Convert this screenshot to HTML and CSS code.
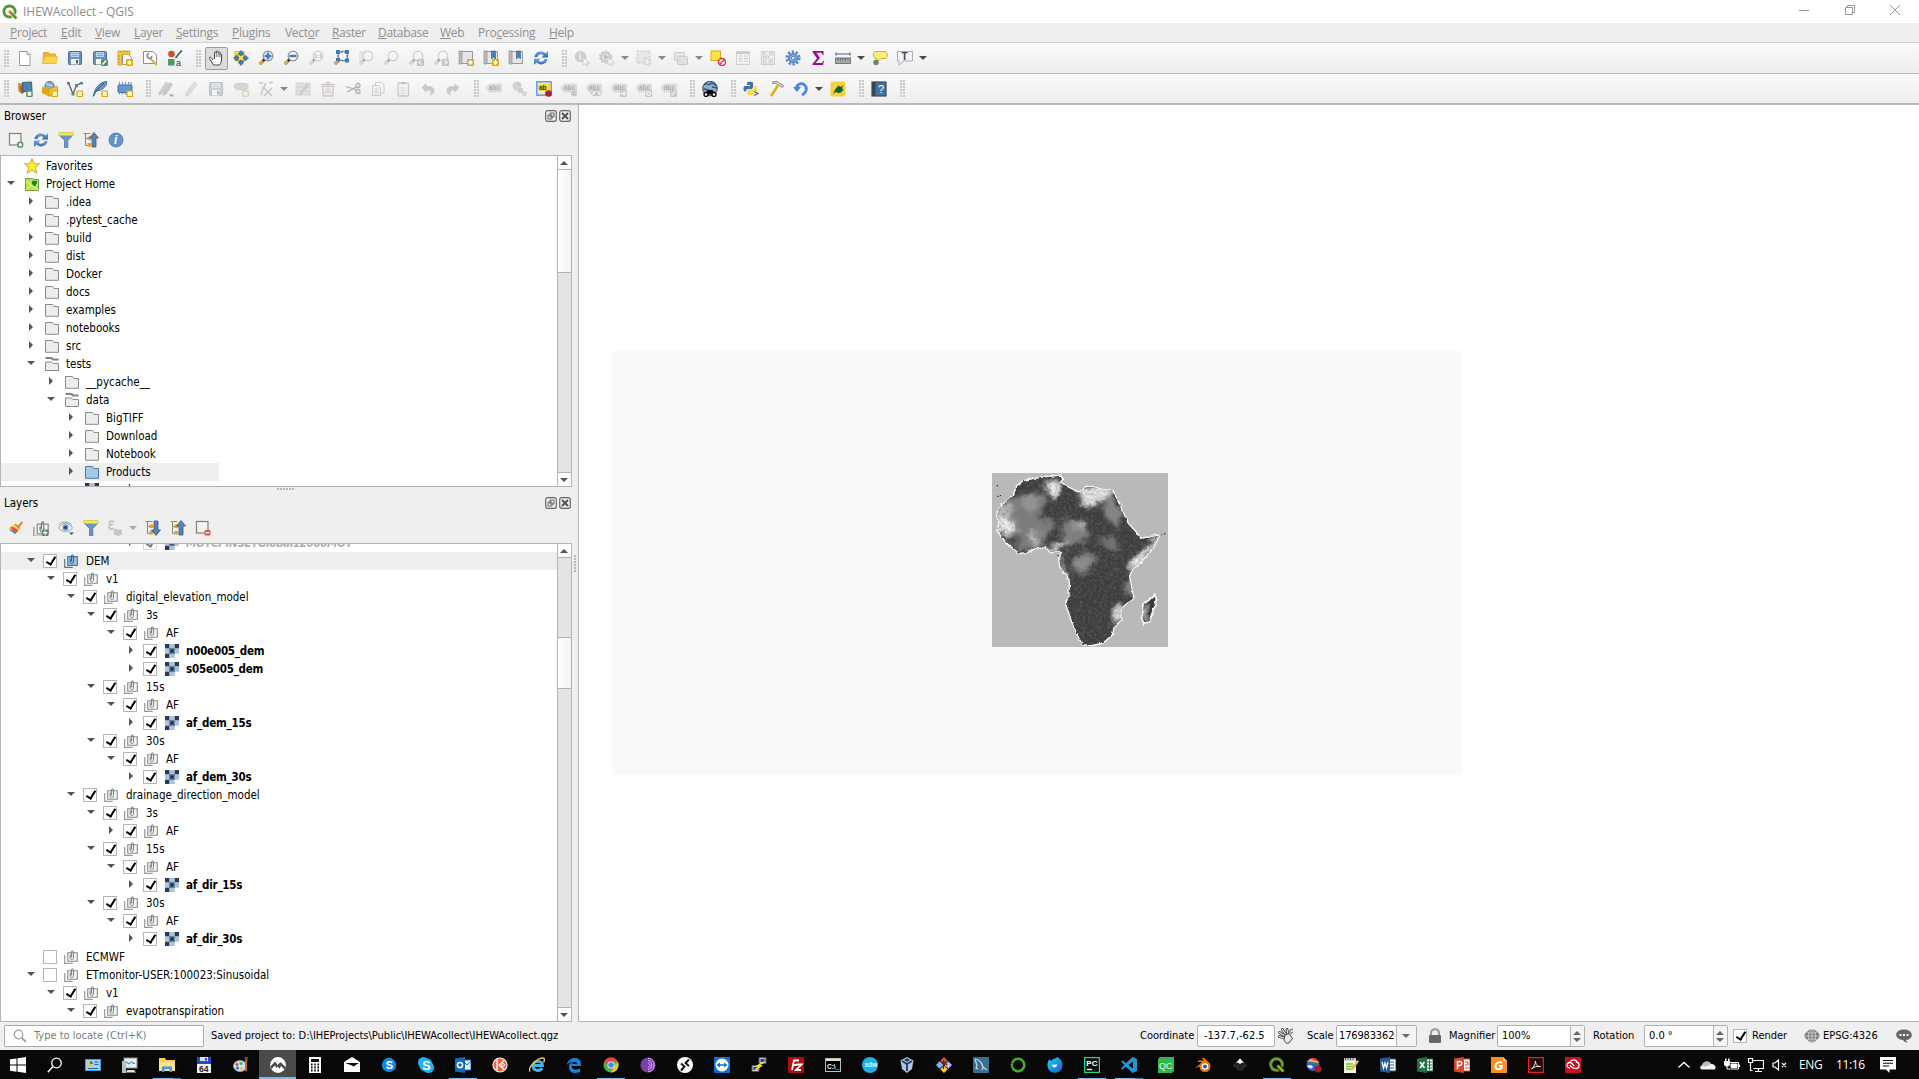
FILE: index.html
```html
<!DOCTYPE html>
<html lang="en">
<head>
<meta charset="utf-8">
<title>IHEWAcollect - QGIS</title>
<link rel="stylesheet" href="styles.css">
</head>
<body>
<svg class="defs" aria-hidden="true">
  <defs>
    <linearGradient id="blue" x1="0" y1="0" x2="0" y2="1"><stop offset="0" stop-color="#7aa7dc"/><stop offset="1" stop-color="#2f66a8"/></linearGradient>
    <linearGradient id="ff" x1="0" y1="0" x2="1" y2="1"><stop offset="0" stop-color="#2ad0f5"/><stop offset="1" stop-color="#0a5fd0"/></linearGradient>
  </defs>
  <symbol id="glass" viewBox="0 0 16 16"><path d="M6.500 9.500 2 14" stroke="#222" stroke-width="2.600"/><path d="M5 11 1.500 14.500" stroke="#edb52c" stroke-width="2.400"/><circle cx="10" cy="6" r="4.800" fill="#f4f6f8" stroke="#8d8d8d" stroke-width="1.200"/></symbol>
  <symbol id="star6" viewBox="0 0 16 16"><rect x="9" y="9" width="7" height="7" rx="1" fill="#d8ad12"/><path d="M12.500 10v5M10 12.500h5M10.700 10.700l3.600 3.600M14.300 10.700l-3.600 3.600" stroke="#fff8d0"/></symbol>
  <symbol id="ysq" viewBox="0 0 16 16"><rect x="10" y="10" width="5.500" height="5.500" rx=".8" fill="#fff6b0" stroke="#d0a818" stroke-width="1.200"/></symbol>
  <symbol id="new" viewBox="0 0 16 16"><path d="M2.500 1.500h7.500l3 3v11h-10.500z" fill="#fff" stroke="#9a9a9a"/><path d="M10 1.500v3h3" fill="#eee" stroke="#9a9a9a"/></symbol>
  <symbol id="open" viewBox="0 0 16 16"><path d="M1 13.500 1.500 2.500h5l1 1.500h6v3" fill="#e8b53a" stroke="#e3aa2a"/><path d="M.500 13.500 3.500 6.500h12l-1.500 7z" fill="#fdd54f" stroke="#efbf38"/></symbol>
  <symbol id="save" viewBox="0 0 16 16"><rect x="1.500" y="1.500" width="13" height="13" rx="1" fill="#6b93bf" stroke="#4d6d8f"/><rect x="4" y="2" width="8" height="5" fill="#b8d1ec"/><path d="M5 3.500h6M5 5.500h6" stroke="#7ea2c8" stroke-width=".8"/><rect x="4" y="9" width="8" height="5.500" fill="#f3f3f3"/><rect x="9" y="10" width="2" height="3.500" fill="#4d5f73"/></symbol>
  <symbol id="saveas" viewBox="0 0 16 16"><use href="#save"/><rect x="9" y="9" width="7" height="7" rx="1.500" fill="#578f5e"/><path d="m10.500 14.500 3.500-4" stroke="#fff" stroke-width="1.500"/></symbol>
  <symbol id="layout" viewBox="0 0 16 16"><path d="M5.500 4.500h6l3 3v7h-9z" fill="#fff" stroke="#999"/><path d="M1 1h12v3.500H4.500V15H1z" fill="#f5cf45" stroke="#c79f1c" stroke-width=".8"/><path d="M4 1v2M7 1v2M10 1v2M1 6h2M1 9h2M1 12h2" stroke="#a8830c" stroke-width=".7"/><use href="#star6"/></symbol>
  <symbol id="layoutmgr" viewBox="0 0 16 16"><path d="M1.500 1.500h9.500l3.500 3.500v8.500h-13z" fill="#fff" stroke="#909090"/><path d="m8 8 6.500 7" stroke="#d8b23a" stroke-width="2"/><path d="M7 3.500C4.500 4 4.500 8.500 8 8.500 9.500 8.500 10 7 9.500 6" fill="none" stroke="#888" stroke-width="1.600"/></symbol>
  <symbol id="style" viewBox="0 0 16 16"><circle cx="4.500" cy="4" r="3.300" fill="#cc4f22"/><path d="m10 6 5-5.500M8.500 8l2-2.500" stroke="#435f7e" stroke-width="1.800"/><rect x="1" y="9" width="6.500" height="6.500" fill="#4f9a62"/><text x="9" y="15.500" font-size="9" fill="#333">a</text></symbol>
  <symbol id="hand" viewBox="0 0 16 16"><path d="M5 10 3 7.500c-1-1-2 0-1.500 1l4 6.500h6c1-1.500 2-3 2-5V4.500c0-1-1.500-1-1.500 0V3c0-1.200-1.800-1.200-1.800 0V1.800C10.200.6 8.300.6 8.300 1.800V3c0-1.200-1.800-1.200-1.800 0v6" fill="#fff" stroke="#444" stroke-linejoin="round"/><path d="M8.300 3v4M10.200 3v4M12 4v3.500" stroke="#555" stroke-width=".8"/></symbol>
  <symbol id="pansel" viewBox="0 0 16 16"><rect x="2" y="1.500" width="9" height="9" fill="#ffe43e" stroke="#e0bb20"/><path d="m8 .5 3 3.500-3 2-3-2zM8 15.500l3-3.500-3-2-3 2zM.5 8 4 5l2 3-2 3zM15.500 8 12 5l-2 3 2 3z" fill="#4878b0" stroke="#335f92" stroke-width=".6"/></symbol>
  <symbol id="zin" viewBox="0 0 16 16"><use href="#glass"/><path d="M10 2.500v7M6.500 6h7" stroke="#477bb8" stroke-width="2.400"/></symbol>
  <symbol id="zout" viewBox="0 0 16 16"><use href="#glass"/><path d="M6.500 6h7" stroke="#477bb8" stroke-width="2.400"/></symbol>
  <symbol id="z11" viewBox="0 0 16 16"><use href="#glass"/><text x="6.300" y="8" font-size="5.500" font-weight="bold" fill="#333">1:1</text></symbol>
  <symbol id="zfull" viewBox="0 0 16 16"><use href="#glass"/><path d="M3 0h4v4H3zM12 0h4v4h-4zM12 8.500h4v4h-4zM3 8h4v3H3z" fill="#4878b0"/><path d="M5 2h9v8.500H5z" fill="none" stroke="#4878b0" stroke-width="1.200" stroke-dasharray="2 1"/></symbol>
  <symbol id="zsel" viewBox="0 0 16 16"><path d="M1 1h6v9H1z" fill="#d6cf9c"/><use href="#glass"/></symbol>
  <symbol id="zlast" viewBox="0 0 16 16"><use href="#glass"/><rect x="9" y="9" width="7" height="7" rx="1" fill="#777"/><path d="m13.500 10.500-2.500 2 2.500 2" fill="none" stroke="#fff" stroke-width="1.300"/></symbol>
  <symbol id="znext" viewBox="0 0 16 16"><use href="#glass"/><rect x="9" y="9" width="7" height="7" rx="1" fill="#777"/><path d="m11.500 10.500 2.500 2-2.500 2" fill="none" stroke="#fff" stroke-width="1.300"/></symbol>
  <symbol id="mapview" viewBox="0 0 16 16"><path d="M1.500 1.500h13v12h-13z" fill="#e6e6e6" stroke="#999"/><path d="M1 1h3v13H1z" fill="#bcbcbc" stroke="#8c8c8c" stroke-width=".7"/></symbol>
  <symbol id="newview" viewBox="0 0 16 16"><use href="#mapview"/><use href="#star6"/></symbol>
  <symbol id="bookmark" viewBox="0 0 16 16"><use href="#mapview"/><path d="M8.500 1h4v8l-2-2-2 2z" fill="#4d80ba" stroke="#315c8e" stroke-width=".6"/></symbol>
  <symbol id="newbookmark" viewBox="0 0 16 16"><use href="#bookmark"/><use href="#star6"/></symbol>
  <symbol id="refresh" viewBox="0 0 16 16"><path d="M1.500 7C2 1.500 9 0 12.500 3.500L15 1v6.500H8.500l2-2C8.500 3.500 5 4 4.500 7z" fill="url(#blue)"/><path d="M14.500 9C14 14.500 7 16 3.500 12.500L1 15V8.500h6.500l-2 2C7.500 12.500 11 12 11.500 9z" fill="url(#blue)"/></symbol>
  <symbol id="arrowcur" viewBox="0 0 16 16"><path d="m9 7 6.500 6-3 .2 1.500 2.500-1.500.3-1.400-2.300L9 15z" fill="#fff" stroke="#777" stroke-width=".8"/></symbol>
  <symbol id="ident" viewBox="0 0 16 16"><circle cx="6.500" cy="6.500" r="5.800" fill="#8a9298"/><text x="4.800" y="10" font-size="9" font-weight="bold" fill="#fff">i</text><use href="#arrowcur"/></symbol>
  <symbol id="action" viewBox="0 0 16 16"><circle cx="6.500" cy="7" r="4.500" fill="#ddd" stroke="#888" stroke-width="2.500"/><circle cx="6.500" cy="7" r="6.200" fill="none" stroke="#888" stroke-dasharray="2 2"/><path d="m5 4 5 3-5 3z" fill="#666"/><use href="#arrowcur"/></symbol>
  <symbol id="select" viewBox="0 0 16 16"><rect x="1" y="1" width="13" height="12" fill="#d8d4b4" stroke="#777" stroke-dasharray="2 1.500"/><use href="#arrowcur"/></symbol>
  <symbol id="selform" viewBox="0 0 16 16"><rect x="1.500" y="2.500" width="10" height="8" rx="1" fill="#ccc" stroke="#888"/><rect x="4.500" y="6.500" width="10" height="8" rx="1" fill="#c8c294" stroke="#888"/></symbol>
  <symbol id="desel" viewBox="0 0 16 16"><rect x="1" y="1" width="9.500" height="9.500" fill="#ffe43e" stroke="#d9a91c"/><circle cx="12" cy="12" r="3.500" fill="#fff" stroke="#d8343c" stroke-width="1.500"/><path d="m9.500 14.500 5-5" stroke="#d8343c" stroke-width="1.500"/></symbol>
  <symbol id="table" viewBox="0 0 16 16"><rect x="1.500" y="1.500" width="13" height="13" fill="#f0f0f0" stroke="#999"/><path d="M1.500 3h13" stroke="#888" stroke-width="2"/><path d="M4 6h3M9 6h4M4 8.500h3M9 8.500h4M4 11h3M9 11h4" stroke="#888"/></symbol>
  <symbol id="calc" viewBox="0 0 16 16"><rect x="1.500" y="1.500" width="13" height="13" fill="#f0f0f0" stroke="#999"/><path d="M1 5h14M1 9h14M1 13h14" stroke="#999"/><path d="M3 3h3M9 3h4M3 7h6M3 11h3M9 11h4" stroke="#777" stroke-width="2" stroke-dasharray="1.500 1"/></symbol>
  <symbol id="gear" viewBox="0 0 16 16"><circle cx="8" cy="8" r="6.300" fill="none" stroke="#4f83c4" stroke-width="2.600" stroke-dasharray="2.200 1.760"/><circle cx="8" cy="8" r="4" fill="#a9c9ec" stroke="#5b8fce" stroke-width="2.500"/><circle cx="8" cy="8" r="1.700" fill="#e8f1fb" stroke="#4f83c4"/></symbol>
  <symbol id="sigma" viewBox="0 0 16 16"><path d="M2.500 1h11v4h-1C12 3 11.500 2.700 10 2.700H6.500L10 8l-4.500 5H11c1.200 0 1.800-.8 2-2.200h1L13 15H2.500v-1.200L7 8.500 2.500 2z" fill="#9b0f93"/></symbol>
  <symbol id="measure" viewBox="0 0 16 16"><path d="M1 4h14M1 2.500v3M15 2.500v3" stroke="#44688f" stroke-width="1.200"/><rect x=".5" y="8" width="15" height="5.500" fill="#a8a8a8" stroke="#777"/><path d="M3 8v2.500M5.500 8v2.500M8 8v2.500M10.500 8v2.500M13 8v2.500" stroke="#555" stroke-width=".7"/></symbol>
  <symbol id="tips" viewBox="0 0 16 16"><path d="M4 1.500h9c3 0 3 7 0 7H9l-4 4V8.500H4c-3.500 0-3.500-7 0-7z" fill="#ffec7d" stroke="#d1a830"/><circle cx="4" cy="12.500" r="2.700" fill="#5f8c5d"/></symbol>
  <symbol id="annot" viewBox="0 0 16 16"><path d="M.5 1.500h15v9.500H7l-5 4v-4H.5z" fill="#f1f3f6" stroke="#a7b0b8"/><text x="4.500" y="10" font-size="10" font-weight="bold" fill="#444">T</text></symbol>
  <symbol id="dsm" viewBox="0 0 16 16"><path d="m1 2 7 1-1 9-5.500-1z" fill="#d38a2c"/><path d="m3 6 5-4v9l-4 2z" fill="#b65a23"/><path d="m5.500 1.500 9-.5.500 9-9 .5z" fill="#4f7fb5" stroke="#35608f"/><rect x="10" y="10" width="5" height="5.500" rx="1" fill="#fff" stroke="#578f5e" stroke-width="1.500"/></symbol>
  <symbol id="gpkg" viewBox="0 0 16 16"><circle cx="7.500" cy="5" r="4.500" fill="#8da9c5" stroke="#4a6c90"/><path d="M0 5.500 7 8v7.500L0 12z" fill="#e3a90b"/><path d="M7 8l8.500-3v7L7 15.500z" fill="#f5c52a" stroke="#c79114" stroke-width=".6"/><path d="M4 3c3-1 3 3 6 1" stroke="#fff" fill="none"/><use href="#ysq"/></symbol>
  <symbol id="newshp" viewBox="0 0 16 16"><path d="M1.500 2 6 13 9.500 4.500 14 2" fill="none" stroke="#555" stroke-width="1.200"/><path d="M0 1h3v2.500H0zM13 1h3v2.500h-3zM8 3h3v3H8zM4.500 11.500h3v3h-3z" fill="#667f99"/><use href="#ysq"/></symbol>
  <symbol id="feather" viewBox="0 0 16 16"><path d="M1.500 15C3 7 7 1.500 14.500.5c1 3-2.500 8.500-10 9.500" fill="#6f9ccd" stroke="#3a658f"/><path d="M1 15.500C4 10 7 6 12 2.500" fill="none" stroke="#2c4e73"/><use href="#ysq"/></symbol>
  <symbol id="memory" viewBox="0 0 16 16"><rect x="1" y="4" width="14" height="7.500" rx="1" fill="#6699d0" stroke="#3e6ea5"/><path d="M2.500 1v3M5.500 1v3M8.500 1v3M11.500 1v3M14 1v3M2.500 11.500v2M5.500 11.500v2M8.500 11.500v2" stroke="#7a97b8" stroke-width="1.200"/><use href="#ysq"/></symbol>
  <symbol id="pencil" viewBox="0 0 16 16"><path d="m4 11 7.500-10L14 3 6.500 13 3 15z" fill="#c4c4b4" stroke="#777" stroke-width=".8"/></symbol>
  <symbol id="pencils" viewBox="0 0 16 16"><path d="m1.500 11 6.500-10 2.500 1.800L4 12.500 1 14z" fill="#999" stroke="#777" stroke-width=".8"/><path d="m5.500 11 6.500-9.500 2.500 2L8 13 5 14.500z" fill="#9a8484" stroke="#766" stroke-width=".8"/><path d="M11 13.500h5L13.500 16z" fill="#111"/></symbol>
  <symbol id="savee" viewBox="0 0 16 16"><use href="#save"/><path d="m9 14 5-7 2 1.500-5 7z" fill="#a88"/></symbol>
  <symbol id="addpoly" viewBox="0 0 16 16"><path d="M2.500 2.500h10c3.500 0 3.500 6 0 6h-7c-5 0-5-4-3-6z" fill="#aaa" stroke="#888"/><use href="#star6"/></symbol>
  <symbol id="vertex" viewBox="0 0 16 16"><path d="M3 14C4 9 5 6 8 2M1 2h4M11 1.500h4M6 7l8 8M14 7l-8 8" stroke="#777" stroke-width="1.500" fill="none"/></symbol>
  <symbol id="modattr" viewBox="0 0 16 16"><rect x="1" y="2" width="14" height="12" fill="#c9c5ae" stroke="#aaa"/><path d="M1 6h14M1 10h14" stroke="#999"/><path d="m5 12 7-10 2 1.500L7 13l-3 1.500z" fill="#888"/></symbol>
  <symbol id="trash" viewBox="0 0 16 16"><path d="M2.500 5.500h11l-1 9.500h-9zM1.500 3.500h13M6 1.500h4" fill="none" stroke="#b47878" stroke-width="1.600"/><path d="M6 7v6M8 7v6M10 7v6" stroke="#b47878"/></symbol>
  <symbol id="cut" viewBox="0 0 16 16"><path d="M1 5.500 12 9M2 11 12 5.500" stroke="#444" stroke-width="1.300"/><circle cx="13" cy="4.500" r="2" fill="none" stroke="#444" stroke-width="1.300"/><circle cx="13" cy="10.500" r="2" fill="none" stroke="#444" stroke-width="1.300"/></symbol>
  <symbol id="copy" viewBox="0 0 16 16"><path d="M5.500 1.500h6l2.500 2.500v8H5.500z" fill="#fff" stroke="#888"/><path d="M2.500 4.500h6l2 2v8h-8z" fill="#eee" stroke="#888"/><path d="M4.500 8h4M4.500 10h4M4.500 12h4" stroke="#999"/></symbol>
  <symbol id="paste" viewBox="0 0 16 16"><rect x="3" y="2" width="10.500" height="13" rx="1" fill="#eee" stroke="#888" stroke-width="1.300"/><path d="M6 2h4.500" stroke="#666" stroke-width="2"/><path d="M5.500 7h5M5.500 9.500h5M5.500 12h5" stroke="#aaa"/></symbol>
  <symbol id="undo" viewBox="0 0 16 16"><path d="m1.500 6.500 5-4.500v3c5-.5 8 1.500 8 4.500 0 2.500-2 4-4.500 5 1.500-3 .5-5-3.500-5v2.500z" fill="#888"/></symbol>
  <symbol id="redo" viewBox="0 0 16 16"><path d="m14.500 6.500-5-4.500v3c-5-.5-8 1.500-8 4.500 0 2.500 2 4 4.500 5-1.500-3-.5-5 3.500-5v2.500z" fill="#888"/></symbol>
  <symbol id="tag" viewBox="0 0 16 16"><path d="m0 7 3-4h12.500v8H3z" fill="#bdb78e" stroke="#a7a27d" stroke-width=".6"/><text x="3" y="9.300" font-size="6.500" font-weight="bold" fill="#333">abc</text></symbol>
  <symbol id="diagram" viewBox="0 0 16 16"><circle cx="6" cy="5" r="4.500" fill="#9f9f9f"/><path d="M6 5v-4.500A4.500 4.500 0 0 1 10.500 5z" fill="#c08080"/><rect x="7" y="7" width="5" height="5" fill="#7fa07f"/><rect x="11" y="10" width="5" height="5" rx="2" fill="#aaa"/></symbol>
  <symbol id="labelhi" viewBox="0 0 16 16"><rect x=".8" y=".8" width="14.400" height="13.400" fill="#eee9c5" stroke="#5599ea" stroke-width="1.400"/><path d="m1.500 6 2-3h11v7H4z" fill="#f6d93a"/><text x="3" y="8.500" font-size="6.500" font-weight="bold" fill="#333">ab</text><circle cx="12.500" cy="12.500" r="3.300" fill="#b12127"/></symbol>
  <symbol id="tagpin" viewBox="0 0 16 16"><use href="#tag"/><circle cx="13" cy="12.500" r="3" fill="#a08080"/></symbol>
  <symbol id="tageye" viewBox="0 0 16 16"><use href="#tag"/><path d="M5 12.500c3-4 8-4 11 0-3 3-8 3-11 0z" fill="#eee" stroke="#666"/><circle cx="10.500" cy="12.500" r="1.500" fill="#555"/></symbol>
  <symbol id="tagmove" viewBox="0 0 16 16"><use href="#tag"/><rect x="9" y="9" width="7" height="7" rx="1" fill="#888"/><path d="M10 12.500h3M12.500 10.500l2 2-2 2" stroke="#fff" fill="none" stroke-width="1.300"/></symbol>
  <symbol id="tagrot" viewBox="0 0 16 16"><use href="#tag"/><rect x="9" y="9" width="7" height="7" rx="1" fill="#888"/><circle cx="12.500" cy="12.500" r="1.800" stroke="#fff" fill="none" stroke-width="1.300"/></symbol>
  <symbol id="tagedit" viewBox="0 0 16 16"><use href="#tag"/><rect x="9" y="9" width="7" height="7" rx="1" fill="#888"/><path d="m10.500 14.500 4-4" stroke="#fff" stroke-width="1.300"/></symbol>
  <symbol id="metasearch" viewBox="0 0 16 16"><circle cx="8" cy="7.500" r="7.300" fill="#8eabcf" stroke="#2d4560"/><path d="M2 4c3-3 4 1 6-1s5 0 6 2M1.500 8c3-1 3 2 6 1M10 6c2 0 3 1 5 1" stroke="#2d4c70" fill="none" stroke-width="1.300"/><path d="M2 13.500 5.500 9h5l3.500 4.500z" fill="#000"/><circle cx="4" cy="13.500" r="2" fill="#fff" stroke="#000" stroke-width="1.300"/><circle cx="12" cy="13.500" r="2" fill="#fff" stroke="#000" stroke-width="1.300"/></symbol>
  <symbol id="python" viewBox="0 0 16 16"><path d="M4 1.500C5 .5 9 .5 10 1.500V6c0 1.500-1 2-2 2H5C3.500 8 3 9 3 10.500H1.500C0 9.500 0 6 1.500 5H7V4H4z" fill="#3a76a9"/><path d="M11.500 5H13c1.500 1 1.500 4.500 0 5.500H7.500v1H11V13c-1 1.500-5.500 1.500-6.500 0v-3C4.500 9 5.500 8.500 7 8.500h2.500c1.500 0 2-1 2-2z" fill="#ffd43b"/><path d="m11 10.500 4 2-4 2" fill="none" stroke="#666" stroke-width="1.200"/></symbol>
  <symbol id="hammer" viewBox="0 0 16 16"><path d="m10 4.500-7 10.500" stroke="#e2a91b" stroke-width="2.600"/><path d="M4.500 1C8-.5 11 1 12 2.500l3.500 2-1 2-4-2.500C8.500 2.500 7 2 4.500 2.500z" fill="#d5d5d5" stroke="#777" stroke-width=".8"/></symbol>
  <symbol id="reload" viewBox="0 0 16 16"><path d="M3.500 9C2.500 3.500 8 1.500 11 3.500c4 3 2.500 8-2 10.500" fill="none" stroke="#4888dc" stroke-width="2.800"/><path d="M0 6h8L4 11z" fill="#4888dc"/></symbol>
  <symbol id="plug" viewBox="0 0 16 16"><rect x=".5" y=".5" width="15" height="15" rx="2" fill="#f6cf46"/><path d="M3 13 5.500 8l3-3.500 2 1.500 3-2-1.500 3 1.500 2L10 12c-2 0-3-.5-4-1z" fill="#10661a"/></symbol>
  <symbol id="book" viewBox="0 0 16 16"><rect x="1" y="1" width="14" height="14" fill="#47719c" stroke="#3d4b59" stroke-width="1.200"/><path d="M1 1h3.500v14H1z" fill="#39454f"/><text x="7" y="12" font-size="11" fill="#fff" font-family="Liberation Serif">?</text></symbol>
  <symbol id="addsel" viewBox="0 0 16 16"><rect x="1.500" y="1.500" width="11.500" height="11.500" fill="#f3f3ef" stroke="#80807a" stroke-width="1.200"/><rect x="10" y="10.500" width="4.500" height="4.500" rx="1" fill="#fff" stroke="#578f5e" stroke-width="1.500"/></symbol>
  <symbol id="filter" viewBox="0 0 16 16"><path d="M1 3h14L9.800 8.500V16H6.500V8.500z" fill="#6896c8" stroke="#47719c" stroke-width=".7"/><rect x="1" y=".7" width="14" height="3" fill="#f5ea55" stroke="#cbb92e" stroke-width=".7"/></symbol>
  <symbol id="treeb" viewBox="0 0 16 16"><path d="M.5 1.500h7M2.500 1.500v12h3M2.500 6.500h3" fill="none" stroke="#8a8a82"/><path d="M4.500 4.500h3.500v3.500H4.500zM4.500 11h3.500v3.500H4.500z" fill="#f7981d"/></symbol>
  <symbol id="collapse" viewBox="0 0 16 16"><use href="#treeb"/><path d="M11 .5 15.500 6H13v9H9V6H6.500z" fill="#5583b6" stroke="#325a88" stroke-width=".8"/></symbol>
  <symbol id="expand" viewBox="0 0 16 16"><use href="#treeb"/><path d="M11 15.500 15.500 10H13V1H9v9H6.500z" fill="#5583b6" stroke="#325a88" stroke-width=".8"/></symbol>
  <symbol id="info" viewBox="0 0 16 16"><circle cx="8" cy="8" r="7" fill="#6292c9" stroke="#44719f" stroke-width=".8"/><text x="6" y="12.300" font-size="12" font-style="italic" font-weight="bold" fill="#fff" font-family="Liberation Serif">i</text></symbol>
  <symbol id="brush" viewBox="0 0 16 16"><path d="m9 8 5.500-6" stroke="#d88a27" stroke-width="2"/><path d="M1 7.500 7 4l5 4.500L7 14z" fill="#f5cf45"/><path d="m2.500 7 3 0 5 3.500L7 14z" fill="#e8503a"/><path d="m1 8 1.500 3L7 14l1-1.500z" fill="#5a90cc"/><path d="m7 4 5 4.500" stroke="#c98b2c" stroke-width="1.500"/></symbol>
  <symbol id="group" viewBox="0 0 14 14"><path d="M.7 5v8.300h8" fill="none" stroke="#9a9a92" stroke-width="1.200"/><path d="M3.700 2.700h9.600v8.600H3.700z" fill="#f4f4f2" stroke="#8d8d85" stroke-width="1.100"/><path d="M6.200 4.500V8c0 2.200 3.200 2.200 3.200 0V2C9.400.4 7.400.4 7.400 2v5.500" fill="none" stroke="#5f7f9f"/></symbol>
  <symbol id="groupsel" viewBox="0 0 14 14"><path d="M.7 5v8.300h8" fill="none" stroke="#4d7ba5" stroke-width="1.200"/><path d="M3.700 2.700h9.600v8.600H3.700z" fill="#9fc5e6" stroke="#4d7ba5" stroke-width="1.200"/><path d="M6.200 4.500V8c0 2.200 3.200 2.200 3.200 0V2C9.400.4 7.400.4 7.400 2v5.500" fill="none" stroke="#2f567c"/></symbol>
  <symbol id="addgroup" viewBox="0 0 16 16"><svg width="14" height="14" y="1"><use href="#group"/></svg><rect x="9" y="9.500" width="6.500" height="6.500" rx="1" fill="#578f5e"/><path d="M12.200 10.500v4.500M10 12.700h4.500" stroke="#fff" stroke-width="1.200"/></symbol>
  <symbol id="eye" viewBox="0 0 16 16"><path d="M.5 8c3.500-6 10.500-6 14 0-3.500 4.500-10.500 4.500-14 0z" fill="#f5f5f5" stroke="#999"/><path d="M1 4.500c4-3.500 9-3 12.500 0" fill="none" stroke="#999"/><circle cx="7.500" cy="7.500" r="3" fill="#5f8fc4"/><circle cx="7.500" cy="7.500" r="1.300" fill="#1b3350"/><path d="M11 12.500h5L13.500 15z" fill="#555"/></symbol>
  <symbol id="eps" viewBox="0 0 16 16"><path d="M7 2C3-.5 0 3.500 4.500 4.500-.5 6 3 11 7 8.500M8 15v-4.500c0-1.500 2-1.500 2 0V14c0 1.500 2 1.500 2 0v-3c0-1.500 2-1.500 2 0v4" fill="none" stroke="#bbb" stroke-width="1.500"/></symbol>
  <symbol id="remove" viewBox="0 0 16 16"><rect x="1.500" y="1.500" width="11.500" height="11.500" fill="#f3f3ef" stroke="#80807a" stroke-width="1.200"/><rect x="9.500" y="10" width="6" height="5.500" rx="1.500" fill="#f0474f"/><path d="M10.500 12.700h4" stroke="#fff" stroke-width="1.300"/></symbol>
  <symbol id="float" viewBox="0 0 12 12"><rect x=".7" y=".7" width="10.600" height="10.600" rx="2" fill="none" stroke="#666" stroke-width="1.200"/><path d="M5 3h4v4H5zM3 5h4v4H3z" fill="#efefef" stroke="#666"/></symbol>
  <symbol id="shut" viewBox="0 0 12 12"><rect x=".7" y=".7" width="10.600" height="10.600" rx="2" fill="none" stroke="#666" stroke-width="1.200"/><path d="m3 3 6 6M9 3 3 9" stroke="#555" stroke-width="2"/></symbol>
  <symbol id="fold" viewBox="0 0 14 14"><path d="M.5 1.500h7l1.500 2h4.500v9.800H.5z" fill="#ededed" stroke="#8a8a86"/></symbol>
  <symbol id="foldopen" viewBox="0 0 14 14"><path d="M.5 1h6l1.500 1.500h5.500" fill="none" stroke="#85857c" stroke-width="2.200"/><path d="M.5 5h6l1.500 1.500h5.500v7H.5z" fill="#ededed" stroke="#8a8a86"/></symbol>
  <symbol id="foldsel" viewBox="0 0 14 14"><path d="M.5 1.500h7l1.500 2h4.500v9.800H.5z" fill="#a6c9e8" stroke="#4d7ba5"/></symbol>
  <symbol id="fav" viewBox="0 0 16 16"><path d="m8 .8 2 5h5.200l-4 3.500 1.500 5.700L8 11.800 3.300 15l1.500-5.700-4-3.500H6z" fill="#fff04a" stroke="#e0ae1c" stroke-width="1.100"/></symbol>
  <symbol id="home" viewBox="0 0 14 14"><path d="M.5 1.500h7l1.500 1h4.500v11H.5z" fill="#b7e34d" stroke="#7c9c46"/><path d="m1 4 5 4 7 5M6 8l-5 5" fill="none" stroke="#eaf7c8"/><path d="M9.500 9.500C5 6 7 3 9.500 4 12.500 3 13.500 6 9.500 9.500z" fill="#118a17"/></symbol>
  <symbol id="raster" viewBox="0 0 13 13"><path d="M0 0h13v13H0z" fill="#fff"/><path d="M4 0h5v4H4zM0 4h4v5H0zM9 4h4v5H9zM4 9h5v4H4z" fill="#a9c3e2"/><path d="M0 0h4v4H0zM9 0h4v4H9zM4 4h5v5H4zM0 9h4v4H0z" fill="#2c3b52"/><path d="M4 4h5v5H4z" fill="#7288a8"/><path d="M5 5h3v3H5z" fill="#1f2b40"/></symbol>
  <symbol id="search" viewBox="0 0 14 14"><circle cx="5.500" cy="5.500" r="4.300" fill="none" stroke="#a0a0a0" stroke-width="1.200"/><path d="m8.800 8.800 4.200 4.200" stroke="#a0a0a0" stroke-width="1.800"/></symbol>
  <symbol id="extents" viewBox="0 0 16 16"><path d="M7 8 1.500 4.500M8 7 4.500 1.500M10 7 9 1.500M6.500 10 1.500 8.500" stroke="#444" stroke-width="2.800" stroke-linecap="round"/><path d="M7 8 1.500 4.500M8 7 4.500 1.500M10 7 9 1.500M6.500 10 1.500 8.500" stroke="#eee" stroke-width="1.200" stroke-linecap="round"/><path d="m7 7 4-1.500 3.500 5-3.500 4.500c-3 1-5-1.500-5-4z" fill="#e8e8e8" stroke="#444"/><path d="M12 5V2l3-1M12.500 5.500 15 4" stroke="#555" fill="none"/></symbol>
  <symbol id="lock" viewBox="0 0 14 16"><path d="M3 7V5c0-5 8-5 8 0v2" fill="none" stroke="#999" stroke-width="2"/><rect x="1" y="7" width="12" height="8" rx="1" fill="#666"/></symbol>
  <symbol id="globe" viewBox="0 0 16 14"><path d="M8 0C4 1 1 4 0 7c2 3 5 6 8 7 3-1 6-4 8-7-1-3-4-6-8-7z" fill="#777"/><path d="M8 0v14M0 7h16M3 3c3 1.500 7 1.500 10 0M3 11c3-1.500 7-1.500 10 0M8 0C3 4 3 10 8 14M8 0c5 4 5 10 0 14" fill="none" stroke="#ddd" stroke-width=".8"/></symbol>
  <symbol id="bubble" viewBox="0 0 16 16"><path d="M8 1.500c10 0 10 10 2 10.500 0 1 1 2 2 2.500-2 0-4-.5-5-2.500C-2.500 11-2 1.500 8 1.500z" fill="#666"/><path d="M3.500 7h2M7 7h2M10.500 7h2" stroke="#fff" stroke-width="2"/></symbol>
</svg>

<header class="titlebar">
  <svg class="ic" viewBox="0 0 16 16"><circle cx="7.500" cy="7.500" r="5.600" fill="none" stroke="#589632" stroke-width="3"/><path d="m7.500 7.500 7 7" stroke="#fff" stroke-width="4"/><path d="m8.500 8.500 6 6" stroke="#589632" stroke-width="2.600"/><circle cx="8" cy="8" r="1.700" fill="#ee7913"/></svg>
  <h1>IHEWAcollect - QGIS</h1>
  <div class="winbtns">
    <svg viewBox="0 0 10 10"><path d="M0 5.500h10" stroke="#999"/></svg>
    <svg viewBox="0 0 10 10"><path d="M.5 2.500h7v7h-7zM2.500 2.500v-2h7v7h-2" fill="none" stroke="#999"/></svg>
    <svg viewBox="0 0 10 10"><path d="m0 0 10 10M10 0 0 10" stroke="#999"/></svg>
  </div>
</header>
<nav class="menubar">
  <span class="m1"><u>P</u>roject</span><span class="m2"><u>E</u>dit</span><span class="m3"><u>V</u>iew</span><span class="m4"><u>L</u>ayer</span><span class="m5"><u>S</u>ettings</span><span class="m6"><u>P</u>lugins</span><span class="m7">Vect<u>o</u>r</span><span class="m8"><u>R</u>aster</span><span class="m9"><u>D</u>atabase</span><span class="m10"><u>W</u>eb</span><span class="m11">Pro<u>c</u>essing</span><span class="m12"><u>H</u>elp</span>
</nav>
<div class="toolbar">
  <i class="grip first"></i>
  <b><svg><use href="#new"/></svg></b><b><svg><use href="#open"/></svg></b><b><svg><use href="#save"/></svg></b><b><svg><use href="#saveas"/></svg></b><b><svg><use href="#layout"/></svg></b><b><svg><use href="#layoutmgr"/></svg></b><b><svg><use href="#style"/></svg></b>
  <i class="grip"></i>
  <b class="pressed"><svg><use href="#hand"/></svg></b><b><svg><use href="#pansel"/></svg></b><b><svg><use href="#zin"/></svg></b><b><svg><use href="#zout"/></svg></b><b class="off"><svg><use href="#z11"/></svg></b><b><svg><use href="#zfull"/></svg></b><b class="off"><svg><use href="#zsel"/></svg></b><b class="off"><svg><use href="#glass"/></svg></b><b class="off"><svg><use href="#zlast"/></svg></b><b class="off"><svg><use href="#znext"/></svg></b><b><svg><use href="#newview"/></svg></b><b><svg><use href="#newbookmark"/></svg></b><b><svg><use href="#bookmark"/></svg></b><b><svg><use href="#refresh"/></svg></b>
  <i class="grip"></i>
  <b class="off"><svg><use href="#ident"/></svg></b><b class="off drop"><svg><use href="#action"/></svg></b><b class="off drop"><svg><use href="#select"/></svg></b><b class="off drop"><svg><use href="#selform"/></svg></b><b><svg><use href="#desel"/></svg></b><b class="off"><svg><use href="#table"/></svg></b><b class="off"><svg><use href="#calc"/></svg></b><b><svg><use href="#gear"/></svg></b><b><svg><use href="#sigma"/></svg></b><b class="drop"><svg><use href="#measure"/></svg></b><b><svg><use href="#tips"/></svg></b><b class="drop"><svg><use href="#annot"/></svg></b>
</div>
<div class="toolbar second">
  <i class="grip first"></i>
  <b><svg><use href="#dsm"/></svg></b><b><svg><use href="#gpkg"/></svg></b><b><svg><use href="#newshp"/></svg></b><b><svg><use href="#feather"/></svg></b><b><svg><use href="#memory"/></svg></b>
  <i class="grip"></i>
  <b class="off"><svg><use href="#pencils"/></svg></b><b class="off"><svg><use href="#pencil"/></svg></b><b class="off"><svg><use href="#savee"/></svg></b><b class="off"><svg><use href="#addpoly"/></svg></b><b class="off drop"><svg><use href="#vertex"/></svg></b><b class="off"><svg><use href="#modattr"/></svg></b><b class="off"><svg><use href="#trash"/></svg></b><b class="off"><svg><use href="#cut"/></svg></b><b class="off"><svg><use href="#copy"/></svg></b><b class="off"><svg><use href="#paste"/></svg></b><b class="off"><svg><use href="#undo"/></svg></b><b class="off"><svg><use href="#redo"/></svg></b>
  <i class="grip"></i>
  <b class="off"><svg><use href="#tag"/></svg></b><b class="off"><svg><use href="#diagram"/></svg></b><b><svg><use href="#labelhi"/></svg></b><b class="off"><svg><use href="#tagpin"/></svg></b><b class="off"><svg><use href="#tageye"/></svg></b><b class="off"><svg><use href="#tagmove"/></svg></b><b class="off"><svg><use href="#tagrot"/></svg></b><b class="off"><svg><use href="#tagedit"/></svg></b>
  <i class="grip"></i>
  <b><svg><use href="#metasearch"/></svg></b>
  <i class="grip"></i>
  <b><svg><use href="#python"/></svg></b><b><svg><use href="#hammer"/></svg></b><b class="drop"><svg><use href="#reload"/></svg></b><b><svg><use href="#plug"/></svg></b>
  <i class="grip"></i>
  <b><svg><use href="#book"/></svg></b>
  <i class="grip"></i>
</div>

<main class="work">
  <aside class="docks">
    <section class="dock browser">
      <header><h2>Browser</h2><svg><use href="#float"/></svg><svg><use href="#shut"/></svg></header>
      <div class="tools"><b><svg><use href="#addsel"/></svg></b><b><svg><use href="#refresh"/></svg></b><b><svg><use href="#filter"/></svg></b><b><svg><use href="#collapse"/></svg></b><b><svg><use href="#info"/></svg></b></div>
      <div class="view">
        <ul class="tree">
          <li class="d0"><i class="tw"></i><svg class="big"><use href="#fav"/></svg>Favorites</li>
          <li class="d0"><i class="tw open"></i><svg><use href="#home"/></svg>Project Home</li>
          <li class="d1"><i class="tw shut"></i><svg><use href="#fold"/></svg>.idea</li>
          <li class="d1"><i class="tw shut"></i><svg><use href="#fold"/></svg>.pytest_cache</li>
          <li class="d1"><i class="tw shut"></i><svg><use href="#fold"/></svg>build</li>
          <li class="d1"><i class="tw shut"></i><svg><use href="#fold"/></svg>dist</li>
          <li class="d1"><i class="tw shut"></i><svg><use href="#fold"/></svg>Docker</li>
          <li class="d1"><i class="tw shut"></i><svg><use href="#fold"/></svg>docs</li>
          <li class="d1"><i class="tw shut"></i><svg><use href="#fold"/></svg>examples</li>
          <li class="d1"><i class="tw shut"></i><svg><use href="#fold"/></svg>notebooks</li>
          <li class="d1"><i class="tw shut"></i><svg><use href="#fold"/></svg>src</li>
          <li class="d1"><i class="tw open"></i><svg><use href="#foldopen"/></svg>tests</li>
          <li class="d2"><i class="tw shut"></i><svg><use href="#fold"/></svg>__pycache__</li>
          <li class="d2"><i class="tw open"></i><svg><use href="#foldopen"/></svg>data</li>
          <li class="d3"><i class="tw shut"></i><svg><use href="#fold"/></svg>BigTIFF</li>
          <li class="d3"><i class="tw shut"></i><svg><use href="#fold"/></svg>Download</li>
          <li class="d3"><i class="tw shut"></i><svg><use href="#fold"/></svg>Notebook</li>
          <li class="d3 sel"><i class="tw shut"></i><svg><use href="#foldsel"/></svg>Products</li>
          <li class="d3"><i class="tw"></i><svg><use href="#raster"/></svg>sand.nc</li>
        </ul>
        <div class="scroll"><i class="up"></i><i class="thumb"></i><i class="down"></i></div>
      </div>
    </section>
    <div class="hsplit"><i></i></div>
    <section class="dock layers">
      <header><h2>Layers</h2><svg><use href="#float"/></svg><svg><use href="#shut"/></svg></header>
      <div class="tools"><b><svg><use href="#brush"/></svg></b><b><svg><use href="#addgroup"/></svg></b><b><svg><use href="#eye"/></svg></b><b><svg><use href="#filter"/></svg></b><b class="drop dim"><svg><use href="#eps"/></svg></b><b><svg><use href="#expand"/></svg></b><b><svg><use href="#collapse"/></svg></b><b><svg><use href="#remove"/></svg></b></div>
      <div class="view">
        <ul class="tree">
          <li class="d6 ghost"><i class="tw shut"></i><i class="cb on"></i><svg><use href="#raster"/></svg>MOTCPINSETGlobal12000MOT</li>
          <li class="d1 sel"><i class="tw open"></i><i class="cb on"></i><svg><use href="#groupsel"/></svg>DEM</li>
          <li class="d2"><i class="tw open"></i><i class="cb on"></i><svg><use href="#group"/></svg>v1</li>
          <li class="d3"><i class="tw open"></i><i class="cb on"></i><svg><use href="#group"/></svg>digital_elevation_model</li>
          <li class="d4"><i class="tw open"></i><i class="cb on"></i><svg><use href="#group"/></svg>3s</li>
          <li class="d5"><i class="tw open"></i><i class="cb on"></i><svg><use href="#group"/></svg>AF</li>
          <li class="d6 leaf"><i class="tw shut"></i><i class="cb on"></i><svg><use href="#raster"/></svg>n00e005_dem</li>
          <li class="d6 leaf"><i class="tw shut"></i><i class="cb on"></i><svg><use href="#raster"/></svg>s05e005_dem</li>
          <li class="d4"><i class="tw open"></i><i class="cb on"></i><svg><use href="#group"/></svg>15s</li>
          <li class="d5"><i class="tw open"></i><i class="cb on"></i><svg><use href="#group"/></svg>AF</li>
          <li class="d6 leaf"><i class="tw shut"></i><i class="cb on"></i><svg><use href="#raster"/></svg>af_dem_15s</li>
          <li class="d4"><i class="tw open"></i><i class="cb on"></i><svg><use href="#group"/></svg>30s</li>
          <li class="d5"><i class="tw open"></i><i class="cb on"></i><svg><use href="#group"/></svg>AF</li>
          <li class="d6 leaf"><i class="tw shut"></i><i class="cb on"></i><svg><use href="#raster"/></svg>af_dem_30s</li>
          <li class="d3"><i class="tw open"></i><i class="cb on"></i><svg><use href="#group"/></svg>drainage_direction_model</li>
          <li class="d4"><i class="tw open"></i><i class="cb on"></i><svg><use href="#group"/></svg>3s</li>
          <li class="d5"><i class="tw shut"></i><i class="cb on"></i><svg><use href="#group"/></svg>AF</li>
          <li class="d4"><i class="tw open"></i><i class="cb on"></i><svg><use href="#group"/></svg>15s</li>
          <li class="d5"><i class="tw open"></i><i class="cb on"></i><svg><use href="#group"/></svg>AF</li>
          <li class="d6 leaf"><i class="tw shut"></i><i class="cb on"></i><svg><use href="#raster"/></svg>af_dir_15s</li>
          <li class="d4"><i class="tw open"></i><i class="cb on"></i><svg><use href="#group"/></svg>30s</li>
          <li class="d5"><i class="tw open"></i><i class="cb on"></i><svg><use href="#group"/></svg>AF</li>
          <li class="d6 leaf"><i class="tw shut"></i><i class="cb on"></i><svg><use href="#raster"/></svg>af_dir_30s</li>
          <li class="d1"><i class="tw"></i><i class="cb"></i><svg><use href="#group"/></svg>ECMWF</li>
          <li class="d1"><i class="tw open"></i><i class="cb"></i><svg><use href="#group"/></svg>ETmonitor-USER:100023:Sinusoidal</li>
          <li class="d2"><i class="tw open"></i><i class="cb on"></i><svg><use href="#group"/></svg>v1</li>
          <li class="d3"><i class="tw open"></i><i class="cb on"></i><svg><use href="#group"/></svg>evapotranspiration</li>
        </ul>
        <div class="scroll"><i class="up"></i><i class="thumb"></i><i class="down"></i></div>
      </div>
    </section>
  </aside>
  <div class="vsplit"><i></i></div>
  <section class="canvas">
    <div class="world">
      <svg class="africa" viewBox="36 24 528 522">
        <defs>
          <path id="land" d="M130 48 160 42 200 36 243 32 247 42 240 52 262 66 290 80 300 82 318 66 340 66 368 76 394 74 402 86 414 112 430 146 444 176 466 200 482 222 510 216 534 212 530 228 508 262 480 292 456 314 447 334 452 360 456 384 460 402 440 414 420 432 422 466 402 484 396 508 370 532 336 540 308 538 292 508 280 482 268 444 258 418 268 390 270 352 262 330 240 304 238 280 246 262 232 258 212 262 198 246 168 250 140 262 118 264 96 246 80 232 64 212 52 196 58 178 52 148 62 126 84 106 102 90 108 66z"/>
          <path id="isle" d="M524 388 530 404 520 436 508 470 492 476 484 460 490 436 488 418 506 406 514 398z"/>
          <clipPath id="inland"><use href="#land"/></clipPath>
          <clipPath id="inisle"><use href="#isle"/></clipPath>
          <filter id="rough" x="-5%" y="-5%" width="110%" height="110%"><feTurbulence type="fractalNoise" baseFrequency=".07" numOctaves="3" seed="4"/><feDisplacementMap in="SourceGraphic" scale="10" xChannelSelector="R" yChannelSelector="G"/></filter>
          <filter id="patch" x="-30%" y="-30%" width="160%" height="160%"><feGaussianBlur stdDeviation="7" result="b"/><feTurbulence type="fractalNoise" baseFrequency=".035" numOctaves="3" seed="9"/><feDisplacementMap in="b" scale="28" xChannelSelector="R" yChannelSelector="G"/></filter>
          <filter id="speckle" x="0" y="0" width="100%" height="100%"><feTurbulence type="fractalNoise" baseFrequency=".12" numOctaves="2" seed="3"/><feColorMatrix values="0 0 0 0 .2  0 0 0 0 .2  0 0 0 0 .2  1 0 0 0 -.4"/></filter>
        </defs>
        <path d="M36 24h528v522H36z" fill="#b9b9b9"/>
        <g filter="url(#rough)">
          <use href="#land" fill="#3c3c3c" stroke="#f8f8f8" stroke-width="7"/>
          <g clip-path="url(#inland)">
            <use href="#land" fill="#3c3c3c"/>
            <g filter="url(#patch)">
              <path d="M104 96 130 92 190 84 202 110 180 140 186 170 204 160 228 172 214 200 186 236 150 258 110 262 80 226 50 196 56 120z" fill="#7c7c7c"/>
              <path d="M46 130 88 108 100 130 96 160 86 210 56 206z" fill="#b5b5b5"/>
              <path d="M56 150 92 166 112 180 104 204 50 200z" fill="#f0f0f0"/>
              <path d="M120 96 180 96 160 140 120 130z" fill="#949494"/>
              <path d="M150 200h20l10 40-28 8z" fill="#bbb"/>
              <path d="M80 210 120 216 116 246 90 236z" fill="#404040"/>
              <path d="M198 50 232 46 244 76 222 102 204 80z" fill="#f2f2f2"/>
              <path d="M290 76 340 60 400 76 388 94 340 124 310 122z" fill="#e6e6e6"/>
              <path d="M372 92 398 92 424 140 414 190 376 160z" fill="#858585"/>
              <path d="M250 186 270 164 320 166 322 220 300 238 240 224z" fill="#808080"/>
              <path d="M280 170h36v26h-36z" fill="#a5a5a5"/>
              <path d="M246 142 262 156 256 196 238 190z" fill="#5a5a5a"/>
              <path d="M354 218 404 208 420 256 388 254z" fill="#707070"/>
              <path d="M282 274 318 258 350 280 332 316 296 326 278 302z" fill="#8c8c8c"/>
              <path d="M534 210 536 228 502 268 478 306 446 322 452 286 500 248z" fill="#f4f4f4"/>
              <path d="M430 350 456 344 460 400 440 394z" fill="#888"/>
              <path d="M404 420 428 416 424 476 396 476z" fill="#e2e2e2"/>
              <path d="M236 262 250 276 244 296 270 330 274 352 256 344 236 306z" fill="#999"/>
              <path d="M180 248 270 230 274 238 214 268z" fill="#ccc"/>
            </g>
            <path d="M36 24h528v522H36z" filter="url(#speckle)"/>
          </g>
          <use href="#isle" fill="#3a3a3a" stroke="#f4f4f4" stroke-width="6"/>
          <g clip-path="url(#inisle)"><path d="M486 420 500 414 496 470 486 474z" fill="#ccc" filter="url(#patch)"/></g>
        </g>
        <path d="M50 60h4v4h-4zM52 92h4v4h-4zM60 90h3v3h-3zM232 270h4v4h-4zM544 208h3v3h-3zM552 204h4v4h-4z" fill="#222"/>
      </svg>
    </div>
  </section>
</main>

<footer class="status">
  <div class="locator"><svg><use href="#search"/></svg>Type to locate (Ctrl+K)</div>
  <span class="msg">Saved project to: D:\IHEProjects\Public\IHEWAcollect\IHEWAcollect.qgz</span>
  <span class="lab coordl">Coordinate</span><div class="field coord">-137.7,-62.5</div>
  <svg class="ext"><use href="#extents"/></svg>
  <span class="lab scalel">Scale</span><div class="field scale">176983362<i><u class="tri dn"></u></i></div>
  <svg class="lk"><use href="#lock"/></svg>
  <span class="lab magl">Magnifier</span><div class="field mag">100%<i class="spin"><u class="tri uptri"></u><u class="tri dn"></u></i></div>
  <span class="lab rotl">Rotation</span><div class="field rot">0.0 °<i class="spin"><u class="tri uptri"></u><u class="tri dn"></u></i></div>
  <i class="cb on rendcb"></i><span class="lab rendl">Render</span>
  <svg class="gl"><use href="#globe"/></svg><span class="lab epsg">EPSG:4326</span>
  <svg class="bub"><use href="#bubble"/></svg>
</footer>

<footer class="taskbar">
  <b class="start"><svg viewBox="0 0 16 16"><path d="M0 2.300 6.500 1.400v6.200H0zM7.500 1.200 16 0v7.600H7.500zM0 8.500h6.500v6.200L0 13.800zM7.500 8.500H16V16l-8.500-1.200z" fill="#fff"/></svg></b>
  <b class="find"><svg viewBox="0 0 16 16"><circle cx="9.500" cy="6" r="4.800" fill="none" stroke="#fff" stroke-width="1.300"/><path d="M6 9.500.8 15.200" stroke="#fff" stroke-width="1.400"/></svg></b>
  <b><svg viewBox="0 0 16 16"><rect y="2" width="16" height="12" fill="#3f9bdf"/><rect x="1" y="3" width="14" height="10" fill="#9ad5f7"/><circle cx="5" cy="7" r="2.800" fill="#f5c543"/><path d="M5 7V4.200A2.800 2.800 0 0 1 7.800 7z" fill="#2f6fb2"/><path d="M9.500 5h4M9.500 7.500h4M3 11.500h10" stroke="#1f69a8" stroke-width="1.200"/></svg></b>
  <b><svg viewBox="0 0 16 16"><rect x="2" y="1" width="13" height="10" fill="#e9eef0" stroke="#8b9294"/><path d="M3 7c2-5 3 2 5-1s3 2 5 0" stroke="#3b93b9" fill="none" stroke-width="1.200"/><path d="M0 4h4v12H0z" fill="#b9bdbf"/><path d="M5 13h7l2 2.500H4z" fill="#ddd"/></svg></b>
  <b class="run dbl"><svg viewBox="0 0 16 16"><path d="M0 1h6l1 2h9v11H0z" fill="#f5ce62"/><path d="M0 5h16v9H0z" fill="#fde08a"/><path d="M3 15V9.500h10V15h-2.500v-3h-5v3z" fill="#3f9bdf"/></svg></b>
  <b><svg viewBox="0 0 16 16"><path d="M1 0h14v8H1z" fill="#2547c8"/><path d="M4 0h8v4H4z" fill="#d9def2"/><path d="M9 1h2v2.500H9z" fill="#2547c8"/><path d="M1 7h14v9H1z" fill="#f3f3f3"/><text x="3" y="14.500" font-size="8.500" font-weight="bold" fill="#222">64</text></svg></b>
  <b><svg viewBox="0 0 16 16"><ellipse cx="7" cy="9" rx="6.500" ry="5.500" fill="#cfe0ee" stroke="#8aa3b8"/><circle cx="4" cy="7.500" r="1.500" fill="#e0492e"/><circle cx="8" cy="6.500" r="1.500" fill="#4bb04f"/><circle cx="4.500" cy="11" r="1.500" fill="#3566c4"/><circle cx="8.500" cy="11.500" r="1.500" fill="#f3c02d"/><path d="M13 1v13" stroke="#c2691c" stroke-width="2"/><path d="M11.700 0h3v4h-3z" fill="#8b4a13"/></svg></b>
  <b class="active"><svg viewBox="0 0 16 16"><circle cx="8" cy="8" r="7.900" fill="#fff"/><path d="M.5 9.500 5 4.500 7.500 8l3-3 5 5-1 2.500L11 9l-1.500 3L8 9.500 6.500 11 5 8.500 1.500 12z" fill="#4a4a4a"/></svg></b>
  <b><svg viewBox="0 0 16 16"><path d="M2 0h12v16H2z" fill="#fff"/><path d="M4 2h8v3H4z" fill="#0a0a0a"/><path d="M4 7.500h8M4 10.500h8M4 13.500h8" stroke="#0a0a0a" stroke-width="1.800" stroke-dasharray="1.600"/></svg></b>
  <b><svg viewBox="0 0 16 16"><path d="M0 5 8 0l8 5v10H0z" fill="#fff"/><path d="M1 6h14L9.500 9.500l-1.500-1z" fill="#0a0a0a"/></svg></b>
  <b><svg viewBox="0 0 16 16"><circle cx="8" cy="8" r="7.200" fill="#1488d8"/><text x="4.800" y="12" font-size="11" font-weight="bold" fill="#fff">S</text></svg></b>
  <b><svg viewBox="0 0 16 16"><circle cx="5.500" cy="5.500" r="5.500" fill="#22b1f0"/><circle cx="10.500" cy="10.500" r="5.500" fill="#22b1f0"/><circle cx="8" cy="8" r="6.800" fill="#22b1f0"/><text x="4.300" y="12.500" font-size="12.500" font-weight="bold" fill="#fff">S</text></svg></b>
  <b class="run"><svg viewBox="0 0 16 16"><path d="M8 3h8v10H8z" fill="#e8f2fa" stroke="#0f6cbd"/><path d="m8 4 4 4 4-4" fill="none" stroke="#0f6cbd"/><path d="M0 1.500 10 0v16L0 14.500z" fill="#0f6cbd"/><circle cx="5" cy="8" r="2.600" fill="none" stroke="#fff" stroke-width="1.500"/></svg></b>
  <b><svg viewBox="0 0 16 16"><circle cx="8" cy="8" r="7" fill="#f0603c" stroke="#fff" stroke-width="1.200"/><path d="M5 2.500v11M12 3.500 7 8l5 4.500" fill="none" stroke="#fff" stroke-width="1.300"/><circle cx="11" cy="8" r="1.500" fill="none" stroke="#fff"/></svg></b>
  <b><svg viewBox="0 0 16 16"><path d="M3.500 8.500h10C13.500 3 4 3 4 9c0 5 7 6 9 2" fill="none" stroke="#47b5ea" stroke-width="2.800"/><path d="M1 14.500C-2 10 11-1 15 1.500c1 1 0 3-.5 4" fill="none" stroke="#f3c53b" stroke-width="1.500"/></svg></b>
  <b><svg viewBox="0 0 16 16"><path d="M1 8C2-1 15-1 15 7v2H5.500c.5 4 5 4.500 8.500 2.500V15C8 17.500 2.500 15 3 9.500 3 6.500 5.500 5 7.500 5 4.500 4.500 2 6 1 8z" fill="#1a82d8"/><path d="M6 7h5c0-3-4.500-3-5 0z" fill="#0a0a0a"/></svg></b>
  <b class="run"><svg viewBox="0 0 16 16"><circle cx="8" cy="8" r="7.500" fill="#4caf50"/><path d="M1.500 4.200A7.500 7.500 0 0 1 14.600 4.500H8z" fill="#e8453c"/><path d="M14.800 4.800A7.500 7.500 0 0 1 8 15.500L11.500 9z" fill="#fbc116"/><path d="M1.500 4.200 5 9.500 8 5z" fill="#e8453c"/><circle cx="8" cy="8" r="3.600" fill="#fff"/><circle cx="8" cy="8" r="2.800" fill="#4688f1"/></svg></b>
  <b><svg viewBox="0 0 16 16"><circle cx="8" cy="8" r="7.600" fill="#7d3fa8"/><path d="M8 3.500c5 0 5 9 0 9M8 6c2.500 0 2.500 4.500 0 4.500M8 1.300c8 0 8 13.400 0 13.400" fill="none" stroke="#d9b5ef"/></svg></b>
  <b><svg viewBox="0 0 16 16"><circle cx="8" cy="8" r="8" fill="#fff"/><path d="m4 6.500 3.500 3-3.500 4M12 2.500 8.500 6l3.500 3" fill="none" stroke="#111" stroke-width="1.900"/></svg></b>
  <b><svg viewBox="0 0 16 16"><rect width="16" height="16" rx="1" fill="#0e6fd6"/><circle cx="8" cy="8" r="6.500" fill="#fff"/><path d="m2.500 8 3.500-2.500v1.700h4V5.500L13.500 8 10 10.500V8.800H6v1.700z" fill="#0e6fd6"/></svg></b>
  <b><svg viewBox="0 0 16 16"><path d="M8 .5h7v6H8zM1 8.500h7v6H1z" fill="#c7c7c7" stroke="#555"/><path d="M9.500 2h4v3h-4zM2.500 10h4v3h-4z" fill="#2530b8"/><path d="m13 5-6 3.500 3 .5-6 4" stroke="#f7e21c" stroke-width="1.600" fill="none"/></svg></b>
  <b><svg viewBox="0 0 16 16"><rect width="16" height="16" rx="1" fill="#b30c0c"/><path d="M4 13 6 3.500h5M5 8h4M8.500 7.500h5L8 13h5" fill="none" stroke="#fff" stroke-width="1.800"/></svg></b>
  <b><svg viewBox="0 0 16 16"><rect x=".5" y="1.500" width="15" height="13" fill="#000" stroke="#bbb"/><path d="M1 3h14" stroke="#ddd" stroke-width="2"/><text x="2" y="11.500" font-size="6.500" font-weight="bold" fill="#fff">C:\_</text></svg></b>
  <b><svg viewBox="0 0 16 16"><circle cx="8" cy="8" r="8" fill="#1fb1e6"/><text x="2.500" y="10.300" font-size="6.500" font-weight="bold" fill="#e8f8ff">xdw</text></svg></b>
  <b><svg viewBox="0 0 16 16"><path d="M8 0 14.500 3.500 13 12 8 16 3 12 1.500 3.500z" fill="#b4c4d9"/><path d="m3 4 5 3 5-3M8 7v7" stroke="#1b3a63" stroke-width="1.800" fill="none"/><path d="m5 3 3-1.800L11 3 8 4.800z" fill="#1b3a63"/></svg></b>
  <b><svg viewBox="0 0 16 16"><path d="m8 0 3.700 3.700L8 7.400 4.300 3.700z" fill="#de4c36"/><path d="m3.700 4.300 3.700 3.700-3.700 3.700L0 8z" fill="#80b3ff"/><path d="m12.300 4.300L16 8l-3.700 3.700L8.600 8z" fill="#c6afe9"/><path d="m8 8.600 3.700 3.700L8 16l-3.700-3.700z" fill="#ffcc3b"/><path d="M7.500 3v9M8 5l3 3" stroke="#333" stroke-width="1.200"/></svg></b>
  <b><svg viewBox="0 0 16 16"><rect width="16" height="16" rx="1" fill="#3a6f91"/><path d="M2 2c4 0 7 4 8 8l4 3M2 2c1 3 1 4 2 6l-1 3 2 1M10 10l-1 3" stroke="#c7dbe8" fill="none" stroke-width="1.200"/></svg></b>
  <b><svg viewBox="0 0 16 16"><circle cx="8" cy="8" r="6.300" fill="none" stroke="#43b02a" stroke-width="2.500"/><path d="M1.500 12C.5 8 1 4 3 2" stroke="#0a0a0a" stroke-width="1.300" stroke-dasharray="1 1.500" fill="none"/></svg></b>
  <b><svg viewBox="0 0 16 16"><path d="M2 2.500 4.500 4C6 1 9 2 10 0c3 1 6 5 5.500 9-1 9-14 9-15 0C.3 6 1 5 2 2.500z" fill="url(#ff)"/><path d="M5 8c2-1 3 0 5-1 .5 2-1 3.500-2.500 3.500S5 9.500 5 8z" fill="#f3e3d8"/></svg></b>
  <b class="run"><svg viewBox="0 0 16 16"><rect x=".6" y=".6" width="14.800" height="14.800" fill="#0d0d0d" stroke="#21d789" stroke-width="1.200"/><text x="2.300" y="9" font-size="8" font-weight="bold" fill="#fff">PC</text><path d="M3 12.500h5" stroke="#fff" stroke-width="1.300"/></svg></b>
  <b class="run dbl"><svg viewBox="0 0 16 16"><path d="M11.500 0 16 2v12l-4.500 2L5 9.800 1.500 12.500 0 11.500 3.500 8 0 4.500l1.500-1L5 6.200zM12 4.500 7.500 8l4.500 3.500z" fill="#2196dd" fill-rule="evenodd"/></svg></b>
  <b><svg viewBox="0 0 16 16"><path d="M2 0h14v14l-2 2H0V2z" fill="#2cb84d"/><text x="1" y="11.500" font-size="9" fill="#eaffea">QC</text></svg></b>
  <b><svg viewBox="0 0 16 16"><path d="M0 11 8 5H3V3.500h6L7 1.500 8.500.5 15 6.500" fill="#ea7600"/><circle cx="10" cy="9.500" r="5.500" fill="#ea7600"/><circle cx="10" cy="9.500" r="3.300" fill="#fff"/><circle cx="10" cy="9.500" r="2" fill="#235e9c"/></svg></b>
  <b><svg viewBox="0 0 16 16"><path d="M8 1.500 15 9l-4 1 1 1.500-4 2-3.500-2L6 10.500 1 9z" fill="#222" stroke="#555" stroke-width=".5"/><path d="m8 1.500 4 4.500-2-.5L8 7 6 5.500 4 6z" fill="#fff"/></svg></b>
  <b class="run"><svg viewBox="0 0 16 16"><circle cx="7.500" cy="7.500" r="5.800" fill="none" stroke="#6d9b2e" stroke-width="3"/><path d="m7 7 8 8" stroke="#0a0a0a" stroke-width="4.500"/><path d="m8.500 8.500 6 6" stroke="#93b023" stroke-width="2.800"/></svg></b>
  <b><svg viewBox="0 0 16 16"><circle cx="7" cy="7.500" r="6.500" fill="#2f66c9"/><path d="M1 5c4-6 11-3 12 1-4 0-8-2-12-1z" fill="#e8b33a"/><path d="M1 9c3-2 5-1 6 1-1 2-4 2-6-1z" fill="#f0f0f0"/><path d="M4 1.500c4-2 7 0 8 3z" fill="#d33"/><circle cx="12" cy="12" r="3.500" fill="#a32020"/></svg></b>
  <b><svg viewBox="0 0 16 16"><path d="M1 2h12v14H1z" fill="#f4f7e4"/><path d="M1 1h12v3H1z" fill="#cfd4cb"/><path d="M2.500 1v2M5 1v2M7.500 1v2M10 1v2" stroke="#555"/><path d="M3 7h7M3 9.500h7M3 12h5" stroke="#73c13a" stroke-width="1.400"/><path d="m8 12 6-9 2 1.500-6 8.500-2.500 1z" fill="#f2b52b"/></svg></b>
  <b><svg viewBox="0 0 16 16"><path d="M8 2h8v12H8z" fill="#fff" stroke="#2b579a"/><path d="M10 5h4M10 8h4M10 11h4" stroke="#2b579a"/><path d="M0 1.500 10 0v16L0 14.500z" fill="#2b579a"/><path d="m2 5 1.500 6L5 6l1.500 5L8 5" fill="none" stroke="#fff" stroke-width="1.300"/></svg></b>
  <b><svg viewBox="0 0 16 16"><path d="M8 2h8v12H8z" fill="#fff" stroke="#217346"/><path d="M10 5h5M10 8h5M10 11h5M12.500 3v10" stroke="#217346"/><path d="M0 1.500 10 0v16L0 14.500z" fill="#217346"/><path d="m3 5 4.500 6M7.500 5 3 11" stroke="#fff" stroke-width="1.500"/></svg></b>
  <b><svg viewBox="0 0 16 16"><path d="M8 2h8v12H8z" fill="#fff" stroke="#d24726"/><path d="M11 5h3v3h-3M11 11h4" stroke="#d24726" fill="none"/><path d="M0 1.500 10 0v16L0 14.500z" fill="#d24726"/><path d="M3.500 12V4.500h2c3 0 3 4 0 4h-2" fill="none" stroke="#fff" stroke-width="1.500"/></svg></b>
  <b><svg viewBox="0 0 16 16"><path d="M0 0h12l4 4v12H0z" fill="#f7901e"/><path d="M12 0v4h4z" fill="#ffd9a6"/><path d="M11 6C9 4 4.500 6 4.500 9.500S9 13 10.500 11l.5-2H8" fill="none" stroke="#fff" stroke-width="1.900"/></svg></b>
  <b><svg viewBox="0 0 16 16"><rect x=".6" y=".6" width="14.800" height="14.800" fill="#2a0707" stroke="#e2231a" stroke-width="1.200"/><path d="M3.500 12C6 10 8 6 7.300 4 8 8 10 10 12.500 9.500 9 9 6 10 3.500 12z" fill="none" stroke="#eee"/></svg></b>
  <b><svg viewBox="0 0 16 16"><rect width="16" height="16" rx="1" fill="#c8101c"/><path d="M5 11C1 11 1 5.500 5 5.500c2 0 3 2 4 3.500M11 5C15 5 15 11.500 11 11.500 7 11.500 5.500 9 5 8M5 5c2-3 6-3 7 .5" fill="none" stroke="#fff" stroke-width="1.300"/></svg></b>
  <div class="tray">
    <svg viewBox="0 0 16 16"><path d="m2.500 10.500 5.500-5 5.500 5" fill="none" stroke="#fff" stroke-width="1.300"/></svg>
    <svg viewBox="0 0 16 16"><path d="M2 12.500C-1 12 0 8.500 2 8.500 3 4 9 3 11 7c4-.5 6 4 3.500 5.500z" fill="#f2f2f2"/><path d="M2 8.500C3 4 9 3 11 7L5.500 9.500z" fill="#bbb"/></svg>
    <svg viewBox="0 0 16 16"><path d="M5.500 5.500h9v6.500h-8M7 7h6v3.500H7z" fill="none" stroke="#fff"/><path d="M7 7h6v4H7zM0 4h6v4c-2 2-4 2-6 0zM1 1.500h1.500V4H1zM4 1.500h1.500V4H4zM15 7.500h1v2.500h-1z" fill="#fff"/><path d="M3 9v3h3" stroke="#fff" fill="none"/></svg>
    <svg viewBox="0 0 16 16"><path d="M4.500 3.500h11v8h-10M7 14.500h7M10.500 11.500v3M.5 1.500h4v4h-4zM2.500 5.500v8h2" fill="none" stroke="#fff" stroke-width="1.200"/></svg>
    <svg viewBox="0 0 16 16"><path d="M1 6h2l3.500-3v10L3 10H1zM10 6l4 4M14 6l-4 4" fill="none" stroke="#fff" stroke-width="1.200"/></svg>
    <span class="eng">ENG</span><span class="clock">11:16</span>
    <svg class="note" viewBox="0 0 16 16"><path d="M0 0h16v12.500H9.500V16L6 12.500H0z" fill="#fff"/><path d="M3 3.500h10M3 6.200h10M3 9h6" stroke="#0a0a0a" stroke-width="1.100"/></svg>
  </div>
</footer>
</body>
</html>
```
FILE: styles.css
```css
* { box-sizing: border-box; }
html, body { margin: 0; height: 100%; }
body {
  display: flex;
  flex-direction: column;
  width: 1919px;
  height: 1079px;
  overflow: hidden;
  background: #efefef;
  color: #000;
  font: 11px/18px "DejaVu Sans Condensed", "DejaVu Sans", sans-serif;
}
.defs { position: absolute; width: 0; height: 0; }
h1, h2, ul { margin: 0; padding: 0; font-weight: normal; }
ul { list-style: none; }
svg { display: block; flex: none; width: 16px; height: 16px; fill: none; }
svg text { font-family: "Liberation Sans", sans-serif; }
i, b { font-style: normal; font-weight: normal; }

/* title and menu */
.titlebar { display: flex; align-items: center; height: 23px; padding-left: 2px; background: #fff; color: #8c8c8c; }
.titlebar h1 { margin-left: 5px; font: 12px/22px "Open Sans", sans-serif; letter-spacing: -.03px; }
.winbtns { display: flex; gap: 35.500px; margin-left: auto; padding-right: 19px; }
.winbtns svg { width: 10px; height: 10px; margin-bottom: 3px; }
.menubar { display: flex; height: 20px; padding-left: 10px; border-bottom: 1px solid #d2d2d2; color: #909090; font: 12px/19px "Open Sans", sans-serif; letter-spacing: -.3px; }
.menubar span { white-space: nowrap; }
.m1 { width: 51px; } .m2 { width: 34px; } .m3 { width: 39px; } .m4 { width: 42px; }
.m5 { width: 56px; } .m6 { width: 53px; } .m7 { width: 47px; } .m8 { width: 46px; }
.m9 { width: 62px; } .m10 { width: 38px; } .m11 { width: 71px; }

/* toolbars */
.toolbar { display: flex; align-items: center; height: 31px; border-bottom: 1px solid #b9b9b9; background: linear-gradient(#fafafa, #ededed); }
.toolbar.second { border-bottom-width: 2px; }
.toolbar b, .tools b { display: flex; align-items: center; justify-content: center; flex: none; width: 25px; height: 24px; }
.toolbar .drop, .tools .drop { width: 37px; padding-left: 4px; justify-content: flex-start; }
.drop::after { content: ""; margin-left: 6px; border: 4px solid transparent; border-top-color: #4a4a4a; border-bottom: 0; }
.off svg { opacity: .38; filter: saturate(.35); }
.off.drop::after { border-top-color: #888; }
.dim.drop::after { border-top-color: #aaa; }
.toolbar .pressed { width: 23px; height: 23px; margin: 0 1px; border: 1px solid #9d9d9d; border-radius: 2px; background: #dcdcdc; }
.grip { flex: none; width: 5px; height: 17px; margin: 0 3px 0 8px; background: radial-gradient(circle at 1px 1px, #c6c6c6 .8px, transparent 1px) 0 0 / 3px 3px; }
.grip.first { margin: 0 3.500px 0 4px; }

/* docks */
.work { display: flex; flex: none; height: 917px; }
.docks { display: flex; flex-direction: column; width: 572px; }
.dock { display: flex; flex-direction: column; }
.browser { height: 382px; }
.layers { height: 530px; }
.hsplit { display: flex; justify-content: center; align-items: center; flex: none; height: 5px; }
.hsplit i { width: 18px; height: 3px; background: radial-gradient(circle at 1px 1px, #b5b5b5 .8px, transparent 1px) 0 0 / 3px 3px; }
.dock > header { display: flex; align-items: center; gap: 2px; height: 21px; padding: 0 1px 0 4px; }
.layers > header { height: 22px; }
.dock h2 { flex: 1; font-size: 11.500px; }
.dock > header svg { width: 12px; height: 12px; }
.tools { display: flex; align-items: center; height: 28px; padding-left: 3px; }
.layers .tools { height: 27px; }
.browser .tools { padding-bottom: 1px; }
.tools + .view { margin-top: 1px; }
.layers .tools + .view { margin-top: 2px; }
.view { display: flex; flex: 1; min-height: 0; border: 1px solid #b4b4b4; background: #fff; }
.tree { flex: 1; overflow: hidden; font-size: 11.500px; }
.tree li { display: flex; align-items: center; gap: 7px; height: 18px; white-space: nowrap; }
.tree svg { width: 14px; height: 14px; }
.tree svg.big { width: 16px; height: 16px; margin: 0 -1px; }
.browser .tree { padding-top: 1px; }
.layers .tree li:first-child { margin-top: -10px; }
.layers .tree svg { margin-right: 1px; }
.layers .leaf svg, .layers .ghost svg { margin-right: 0; margin-left: 1px; }
.d0 { padding-left: 3px; } .d1 { padding-left: 23px; } .d2 { padding-left: 43px; } .d3 { padding-left: 63px; }
.d4 { padding-left: 83px; } .d5 { padding-left: 103px; } .d6 { padding-left: 123px; }
.sel { background: #efefef; }
.browser .sel { width: 218px; }
.leaf { font-weight: bold; letter-spacing: -.22px; }
.ghost { color: #b0b0b0; font-weight: bold; font-style: italic; letter-spacing: -.35px; }
.ghost .cb { opacity: .5; }
.tw { display: flex; align-items: center; justify-content: center; flex: none; width: 14px; height: 14px; margin-bottom: 2px; }
.tw.open::after { content: ""; border: 4px solid transparent; border-top-color: #555; border-bottom: 0; }
.tw.shut::after { content: ""; border: 4px solid transparent; border-left-color: #555; border-right: 0; }
.cb { flex: none; width: 14px; height: 14px; margin-left: -1px; border: 1px solid #b5b5b5; background: #fff; }
.tree .cb { margin-left: -2px; margin-bottom: 1px; }
.cb.on::after { content: ""; display: block; width: 4px; height: 8px; margin: 0 0 0 4px; border: solid #000; border-width: 0 2px 2px 0; transform: rotate(32deg); }
.scroll { display: flex; flex-direction: column; width: 14px; border-left: 1px solid #b4b4b4; background: #e4e4e4; }
.up, .down { display: flex; align-items: center; justify-content: center; height: 14px; background: #fbfbfb; }
.up { border-bottom: 1px solid #b4b4b4; }
.down { margin-top: auto; border-top: 1px solid #b4b4b4; }
.up::after, .down::after { content: ""; margin-right: 2px; border: 4px solid transparent; }
.up::after { border-bottom-color: #555; border-top: 0; }
.down::after { border-top-color: #555; border-bottom: 0; }
.thumb { border-bottom: 1px solid #b4b4b4; background: linear-gradient(90deg, #fff, #f3f3f3); }
.browser .thumb { height: 103px; }
.layers .thumb { height: 52px; margin-top: 79px; border-top: 1px solid #b4b4b4; }
.vsplit { display: flex; align-items: center; justify-content: center; width: 6px; }
.vsplit i { width: 3px; height: 18px; background: radial-gradient(circle at 1px 1px, #b5b5b5 .8px, transparent 1px) 0 0 / 3px 3px; }
.canvas { flex: 1; display: grid; justify-items: start; align-items: start; padding: 246px 0 0 33px; border: 1px solid #b4b4b4; border-width: 0 0 1px 1px; background: #fff; }
.world { display: grid; width: 850px; height: 424px; padding: 122px 0 0 380px; background: #f9f9f9; }
.world .africa { width: 176px; height: 174px; }

/* status bar */
.status { display: flex; align-items: center; flex: none; height: 28px; padding-left: 4px; white-space: nowrap; }
.locator { display: flex; align-items: center; gap: 7px; width: 200px; height: 22px; padding-left: 8px; border: 1px solid #a8a8a8; border-radius: 2px; background: #fff; color: #7c7c7c; }
.locator svg { width: 14px; height: 14px; }
.msg { width: 929px; margin-left: 7px; }
.field { display: flex; align-items: center; height: 22px; border: 1px solid #b0b0b0; border-radius: 2px; background: #fff; }
.field i { display: flex; flex-direction: column; align-items: center; justify-content: center; gap: 3px; align-self: stretch; margin-left: auto; border-left: 1px solid #b4b4b4; background: #f4f4f4; }
.tri { border: 4px solid transparent; }
.tri.dn { border-top-color: #666; border-bottom: 0; }
.tri.uptri { border-bottom-color: #666; border-top: 0; }
.coordl { width: 57px; }
.coord { width: 78px; padding-left: 6px; }
.ext { margin-left: 3px; }
.scalel { width: 29px; margin-left: 13px; }
.scale { width: 81px; padding-left: 2px; letter-spacing: -.15px; }
.scale i { width: 20px; }
.scale .tri { margin-right: 2px; }
.lk { width: 14px; margin-left: 11px; }
.magl { width: 48px; margin-left: 7px; }
.mag { width: 88px; padding-left: 4px; }
.mag i, .rot i { width: 14px; }
.spin .tri { margin-right: 1px; }
.rotl { width: 51px; margin-left: 8px; }
.rot { width: 84px; padding-left: 4px; }
.rendcb { margin-left: 5px; }
.rendl { width: 52px; margin-left: 5px; }
.gl { height: 14px; }
.epsg { width: 73px; margin-left: 3px; }

/* taskbar */
.taskbar { display: flex; flex: none; height: 29px; background: #080808; color: #fff; }
.taskbar b { display: flex; align-items: center; justify-content: center; flex: none; width: 37px; height: 29px; }
.taskbar .start { width: 36px; }
.taskbar .find { width: 38px; }
.taskbar .active { background: linear-gradient(#76b9ed, #76b9ed) bottom / 100% 2px no-repeat #4b4b4b; }
.taskbar .run { background: linear-gradient(#76b9ed, #76b9ed) 50% 100% / 28px 1.500px no-repeat; }
.taskbar .dbl { background: linear-gradient(90deg, #76b9ed 20px, #47779b 20px) 50% 100% / 28px 1.500px no-repeat; }
.tray { display: flex; align-items: center; gap: 8px; margin-left: auto; width: 243px; padding-right: 4px; font: 12px/29px "Open Sans", sans-serif; letter-spacing: -.4px; }
.eng { width: 29px; margin-left: 3px; }
.clock { width: 34px; }
.tray .note { margin-left: 2px; }
```
